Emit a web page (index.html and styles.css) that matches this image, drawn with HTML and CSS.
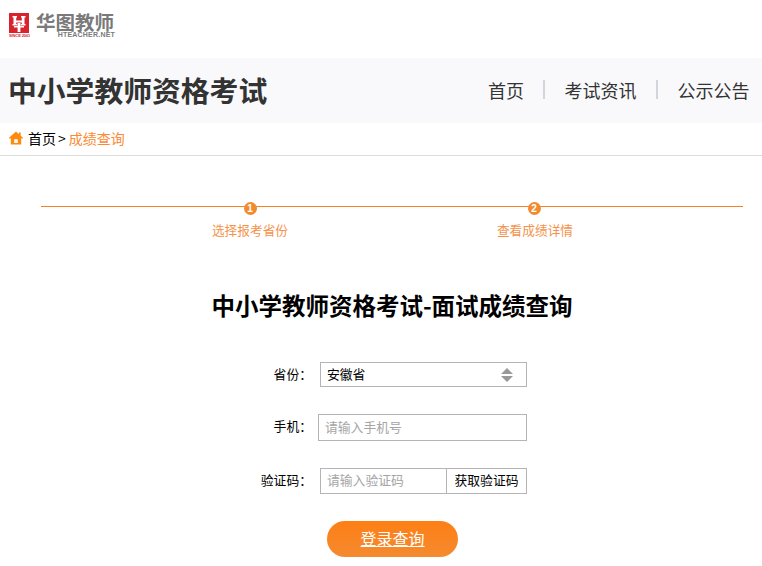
FILE: index.html
```html
<!DOCTYPE html>
<html lang="zh-CN">
<head>
<meta charset="utf-8">
<title>中小学教师资格考试-面试成绩查询</title>
<link rel="stylesheet" href="styles.css">
</head>
<body>
<header class="logo-bar">
  <div class="logo-mark">
    <svg class="logo-icon" width="20" height="20" viewBox="0 0 20 20">
      <rect width="20" height="20" fill="#d8232f"/>
      <path d="M3.500 3H8v1.500H7.200V7.500h5.600V4.500H12V3h4.500v1.500h-1V11h1v1.500h-4.800V11h1.100V9.500H7.200V11h1.100v1.500H3.500V11h1V4.500h-1z" fill="#fff"/>
      <path d="M8.600 10h2.800v3H15v1.600h-3.600V19H8.600v-4.400H5V13h3.600z" fill="#fff"/>
    </svg>
    <span class="logo-since">SINCE 2001</span>
  </div>
  <div class="logo-words">
    <span class="logo-cn">华图教师</span>
    <span class="logo-en">HTEACHER.NET</span>
  </div>
</header>
<div class="band">
  <h1 class="site-title">中小学教师资格考试</h1>
  <nav class="nav">
    <a>首页</a><i class="sep"></i><a>考试资讯</a><i class="sep"></i><a>公示公告</a>
  </nav>
</div>
<div class="crumbs">
  <svg class="home" width="14" height="14" viewBox="0 0 14 14"><path fill-rule="evenodd" d="M7 .5 0 6.800l.9 1.100L1.800 7.100V13.500h10.400V7.100l.9.800 .9-1.100-2.300-2.100V1.500h-1.800v1.700zM5.200 8.300h3.600v3.700H5.200z" fill="#ff8a0d"/></svg>
  <span class="crumb-home">首页</span><span class="crumb-gt">&gt;</span><span class="crumb-now">成绩查询</span>
</div>
<section class="steps">
  <div class="step"><b class="dot">1</b><span>选择报考省份</span></div>
  <div class="step"><b class="dot">2</b><span>查看成绩详情</span></div>
</section>
<h2 class="form-title">中小学教师资格考试-面试成绩查询</h2>
<form class="form">
  <div class="row row-select">
    <label class="label">省份：</label>
    <div class="select">
      <span>安徽省</span>
      <svg width="12" height="14" viewBox="0 0 12 14"><path d="M6 0l6 6H0zM0 8h12l-6 6z" fill="#999"/></svg>
    </div>
  </div>
  <div class="row row-phone">
    <label class="label">手机：</label>
    <input class="input phone" placeholder="请输入手机号">
  </div>
  <div class="row row-code">
    <label class="label">验证码：</label>
    <div class="code">
      <input class="input code-input" placeholder="请输入验证码">
      <span class="code-btn">获取验证码</span>
    </div>
  </div>
  <button class="submit" type="button">登录查询</button>
</form>
</body>
</html>
```
FILE: styles.css
```css
* { box-sizing: border-box; }
html, body { margin: 0; padding: 0; }
body {
  width: 762px;
  height: 566px;
  overflow: hidden;
  background: #fff;
  font-family: "Noto Sans CJK SC", "Liberation Sans", sans-serif;
  color: #000;
}
.logo-bar {
  height: 58px;
  padding: 13px 0 0 9px;
  display: flex;
  gap: 7px;
}
.logo-mark { width: 20px; display: flex; flex-direction: column; }
.logo-icon { display: block; }
.logo-since {
  height: 5px;
  background: #fff;
  color: #d8232f;
  font: bold 4px/5px "Liberation Sans", sans-serif;
  white-space: nowrap;
  letter-spacing: -.1px;
}
.logo-words { display: flex; flex-direction: column; width: 79px; color: #7a7a7a; }
.logo-cn { height: 18px; font-size: 19.500px; line-height: 18px; font-weight: 700; white-space: nowrap; }
.logo-en {
  font: bold 7px/7px "Liberation Sans", sans-serif;
  text-align: right;
  letter-spacing: .2px;
  white-space: nowrap;
}
.band {
  height: 65px;
  background: #f9f9fb;
  display: flex;
  align-items: center;
  justify-content: space-between;
  padding: 0 12.400px 2px 8px;
  color: #333;
}
.site-title { margin: 0; font-size: 28.800px; font-weight: 700; line-height: 63px; }
.nav { display: flex; align-items: center; font-size: 18px; line-height: 24px; }
.sep { width: 2px; height: 19px; background: #d3d5dc; margin: 0 19.500px 0 19px; }
.sep:last-of-type { margin-right: 20.100px; }
.crumbs {
  height: 33px;
  border-bottom: 1px solid #dcdcdc;
  padding: 0 0 2px 9px;
  display: flex;
  align-items: center;
  font-size: 14px;
}
.home { margin-right: 5px; }
.crumb-gt { margin: 0 3px 0 2px; }
.crumb-now { color: #fb8a35; }
.steps {
  margin: 50px 19px 0 41px;
  height: 45px;
  border-top: 1px solid #f58220;
  display: flex;
  padding-left: 149px;
  gap: 165px;
}
.step {
  width: 120px;
  display: flex;
  flex-direction: column;
  align-items: center;
  color: #f5924a;
  font-size: 12.700px;
  line-height: 20px;
}
.step span { margin-top: 5px; width: 120px; text-align: center; white-space: nowrap; }
.dot {
  width: 13px;
  height: 13px;
  border-radius: 50%;
  background: #f28a2e;
  color: #fff;
  font: bold 10px/13px "Liberation Sans", sans-serif;
  text-align: center;
  margin-top: -5px;
}
.step + .step .dot { margin-left: -2px; }
.form-title {
  margin: 0;
  padding-top: 36px;
  padding-left: 22px;
  text-align: center;
  font-size: 23.500px;
  line-height: 36px;
  font-weight: 700;
}
.form { display: flex; flex-direction: column; padding-top: 39px; }
.row { display: flex; align-items: center; font-size: 12.800px; }
.label { width: 312px; text-align: right; white-space: nowrap; flex: none; line-height: 20px; }
.select {
  margin-left: 8px;
  width: 207px;
  height: 25px;
  border: 1px solid #b4b4b4;
  display: flex;
  align-items: center;
  justify-content: space-between;
  padding: 0 13px 0 6px;
}
.select span { padding-bottom: 2px; }
.row-select .label { padding-bottom: 2px; }
.row-phone { margin-top: 27px; }
.row-phone .label { padding-bottom: 4px; }
.row-code .label { padding-bottom: 2px; }
.input {
  border: 1px solid #b4b4b4;
  font: 12.800px "Noto Sans CJK SC", sans-serif;
  padding: 0 6px 3px;
  outline: none;
  background: #fff;
}
.input::placeholder { color: #a5a5a5; opacity: 1; }
.phone { margin-left: 6px; width: 209px; height: 27px; }
.row-code { margin-top: 27px; }
.code { margin-left: 8px; width: 207px; height: 26px; display: flex; border: 1px solid #b4b4b4; }
.code-input { border: 0; width: 125px; height: 24px; }
.code-btn {
  flex: 1;
  border-left: 1px solid #b4b4b4;
  text-align: center;
  line-height: 21px;
  white-space: nowrap;
}
.submit {
  align-self: flex-start;
  margin: 27px 0 0 327px;
  width: 131px;
  height: 36px;
  border: 0;
  border-radius: 18px;
  background: linear-gradient(#fd7f14, #f58a30);
  color: #fff;
  font: 16px "Noto Sans CJK SC", sans-serif;
  text-decoration: underline;
  padding: 0 0 2px;
}
```
